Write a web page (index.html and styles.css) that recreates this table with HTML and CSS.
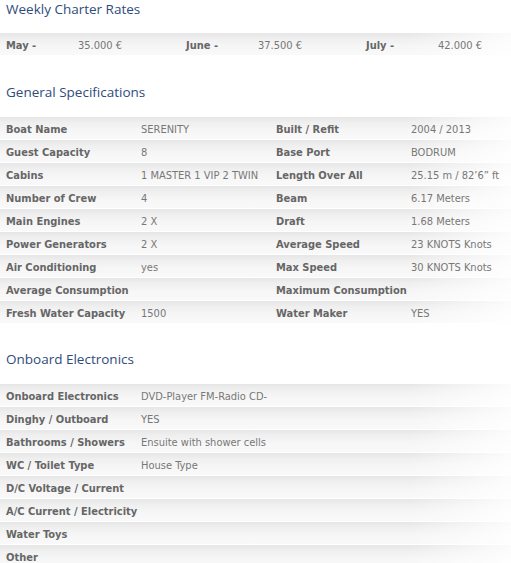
FILE: index.html
```html
<!DOCTYPE html>
<html>
<head>
<meta charset="utf-8">
<link rel="stylesheet" href="styles.css">
</head>
<body>
<div class="page">
  <h2 class="title title-rates">Weekly Charter Rates</h2>
  <div class="rates">
    <div class="row rates-row">
      <span class="lbl">May -</span><span class="val">35.000 €</span>
      <span class="lbl">June -</span><span class="val">37.500 €</span>
      <span class="lbl">July -</span><span class="val">42.000 €</span>
    </div>
  </div>

  <h2 class="title title-spec">General Specifications</h2>
  <div class="specs">
    <div class="row spec-row"><span class="lbl">Boat Name</span><span class="val">SERENITY</span><span class="lbl">Built / Refit</span><span class="val">2004 / 2013</span></div>
    <div class="row spec-row"><span class="lbl">Guest Capacity</span><span class="val">8</span><span class="lbl">Base Port</span><span class="val">BODRUM</span></div>
    <div class="row spec-row"><span class="lbl">Cabins</span><span class="val">1 MASTER 1 VIP 2 TWIN</span><span class="lbl">Length Over All</span><span class="val">25.15 m / 82’6” ft</span></div>
    <div class="row spec-row"><span class="lbl">Number of Crew</span><span class="val">4</span><span class="lbl">Beam</span><span class="val">6.17 Meters</span></div>
    <div class="row spec-row"><span class="lbl">Main Engines</span><span class="val">2 X</span><span class="lbl">Draft</span><span class="val">1.68 Meters</span></div>
    <div class="row spec-row"><span class="lbl">Power Generators</span><span class="val">2 X</span><span class="lbl">Average Speed</span><span class="val">23 KNOTS Knots</span></div>
    <div class="row spec-row"><span class="lbl">Air Conditioning</span><span class="val">yes</span><span class="lbl">Max Speed</span><span class="val">30 KNOTS Knots</span></div>
    <div class="row spec-row"><span class="lbl">Average Consumption</span><span class="val"></span><span class="lbl">Maximum Consumption</span><span class="val"></span></div>
    <div class="row spec-row"><span class="lbl">Fresh Water Capacity</span><span class="val">1500</span><span class="lbl">Water Maker</span><span class="val">YES</span></div>
  </div>

  <h2 class="title title-elec">Onboard Electronics</h2>
  <div class="specs">
    <div class="row elec-row"><span class="lbl">Onboard Electronics</span><span class="val">DVD-Player FM-Radio CD-</span></div>
    <div class="row elec-row"><span class="lbl">Dinghy / Outboard</span><span class="val">YES</span></div>
    <div class="row elec-row"><span class="lbl">Bathrooms / Showers</span><span class="val">Ensuite with shower cells</span></div>
    <div class="row elec-row"><span class="lbl">WC / Toilet Type</span><span class="val">House Type</span></div>
    <div class="row elec-row"><span class="lbl">D/C Voltage / Current</span><span class="val"></span></div>
    <div class="row elec-row"><span class="lbl">A/C Current / Electricity</span><span class="val"></span></div>
    <div class="row elec-row"><span class="lbl">Water Toys</span><span class="val"></span></div>
    <div class="row elec-row"><span class="lbl">Other</span><span class="val"></span></div>
  </div>
</div>
</body>
</html>
```

FILE: styles.css
```css
html, body {
  margin: 0;
  padding: 0;
  overflow: hidden;
  background: #ffffff;
}

.page {
  font-family: "DejaVu Sans Condensed", "DejaVu Sans", sans-serif;
  font-size: 11px;
  color: #777777;
}

.title {
  margin: 0;
  padding-left: 6px;
  font-family: "Open Sans", sans-serif;
  font-weight: 400;
  font-size: 13.5px;
  line-height: 18px;
  color: #2f4b7c;
  box-sizing: border-box;
}

.title-rates {
  height: 33px;
  padding-top: 0;
}

.title-spec {
  height: 62px;
  padding-top: 28px;
}

.title-elec {
  height: 61px;
  padding-top: 27px;
}

.specs {
  display: flex;
  flex-direction: column;
  gap: 1px;
}

.row {
  display: grid;
  align-items: center;
  height: 22px;
  padding-top: 2px;
  box-sizing: border-box;
  overflow: hidden;
  background:
    linear-gradient(to right, rgba(255,255,255,0) 0%, rgba(255,255,255,0) 80%, rgba(255,255,255,0.85) 100%),
    linear-gradient(to bottom, #e6e6e6 0%, #efefef 25%, #f6f6f6 60%, #f9f9f9 100%);
}

.rates-row {
  grid-template-columns: 72px 108px 72px 108px 72px minmax(0, 1fr);
}

.spec-row {
  grid-template-columns: 135px 135px 135px minmax(0, 1fr);
}

.elec-row {
  grid-template-columns: 135px minmax(0, 1fr);
}

.lbl,
.val {
  padding-left: 6px;
  white-space: nowrap;
}

.lbl {
  font-weight: 700;
  color: #666666;
}

.val {
  color: #777777;
}
```
